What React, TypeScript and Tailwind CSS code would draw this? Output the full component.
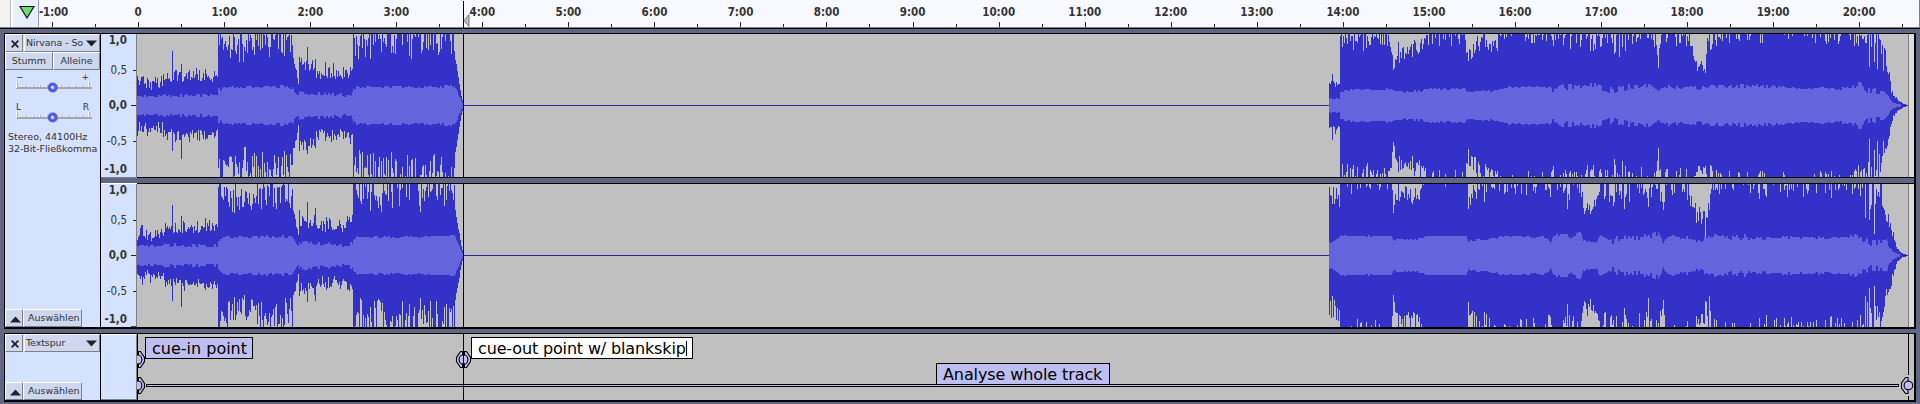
import React from "react";

const FONT = "font-['DejaVu_Sans','Liberation_Sans',sans-serif]";
const FONT_NARROW = "font-['DejaVu_Sans_Condensed','DejaVu_Sans',sans-serif] [font-stretch:condensed]";

const LEFT = 137;
const END = 1908;
const MID = 71;

// x, lowest peak, highest peak, rms, rms jitter
type Key = [number, number, number, number, number];
// x, upper peak, lower peak
type Spike = [number, number, number];

const upperKeys: Key[] = [
  [137, 14, 32, 9, 1], [162, 15, 30, 9, 1], [165, 22, 36, 10, 2], [217, 22, 38, 9, 2],
  [218, 46, 84, 15, 2], [224, 46, 84, 18, 1.5], [240, 40, 90, 18, 1.5], [250, 44, 76, 18, 1.5], [262, 46, 92, 18, 1.5],
  [286, 44, 90, 18, 2], [292, 42, 80, 18, 2], [294, 38, 50, 15, 2], [298, 20, 22, 9, 1], [299, 26, 48, 13, 2], [304, 28, 46, 12, 2],
  [320, 20, 44, 11, 2], [345, 24, 40, 10, 2], [352, 28, 44, 12, 2], [353, 46, 92, 16, 2], [358, 44, 100, 18, 1.5],
  [390, 42, 106, 18, 1.5], [420, 44, 104, 18, 1.5], [454, 48, 100, 19, 1.5], [455, 44, 50, 17, 1], [458, 26, 30, 11, 1],
  [461, 8, 10, 4, 0], [463, 0, 1, 0, 0], [1328, 0, 0, 0, 0], [1329, 20, 30, 6, 1], [1339, 18, 24, 7, 1],
  [1340, 52, 84, 13, 1], [1346, 54, 84, 15, 1], [1390, 53, 92, 16, 1], [1393, 34, 42, 14, 1], [1397, 44, 66, 13, 1],
  [1422, 46, 70, 14, 1], [1424, 56, 92, 16, 1], [1464, 58, 94, 16, 1], [1468, 44, 64, 13, 1], [1480, 50, 74, 14, 1], [1492, 50, 72, 14, 1],
  [1500, 56, 84, 16, 1], [1508, 62, 94, 18, 1], [1550, 60, 94, 18, 1], [1552, 50, 70, 13, 2], [1558, 58, 96, 17, 4],
  [1590, 52, 92, 20, 2], [1598, 54, 92, 20, 2], [1602, 52, 84, 15, 3], [1620, 46, 94, 16, 4], [1632, 56, 92, 19, 3],
  [1650, 60, 94, 19, 2], [1656, 52, 74, 17, 3], [1658, 38, 48, 12, 2], [1661, 60, 94, 18, 3], [1688, 56, 90, 18, 2],
  [1693, 42, 54, 18, 2], [1698, 35, 50, 16, 3], [1705, 34, 50, 16, 3], [1709, 52, 84, 18, 2], [1720, 62, 94, 19, 1.5],
  [1740, 60, 104, 18, 3], [1780, 62, 104, 19, 1.5], [1801, 64, 104, 16, 1], [1830, 60, 94, 17, 1.5], [1850, 60, 94, 17, 2],
  [1860, 54, 96, 20, 4], [1868, 44, 106, 15, 4], [1880, 44, 110, 14, 4], [1883, 38, 76, 15, 3], [1887, 32, 50, 11, 1],
  [1890, 20, 28, 5, 1], [1893, 8, 13, 2, 0], [1898, 4, 6, 1, 0], [1903, 1, 1, 0, 0], [1908, 0, 0, 0, 0],
];

const lowerKeys: Key[] = [
  ...upperKeys.filter((k) => k[0] < 1329).map(([x, lo, hi, r, j]): Key => [x, lo * 0.97, hi * 0.94, r, j]),
  [1329, 48, 72, 12, 1], [1339, 46, 66, 17, 1], [1341, 58, 100, 19, 0.6], [1391, 62, 104, 19, 0.6], [1393, 42, 50, 14, 1],
  [1396, 52, 78, 16, 1], [1420, 50, 78, 16, 1], [1425, 62, 108, 19, 0.5], [1466, 64, 108, 19, 0.5], [1468, 46, 52, 13, 1],
  [1471, 52, 84, 15, 1], [1496, 52, 84, 16, 1], [1500, 60, 100, 19, 1], [1546, 58, 90, 18, 1], [1550, 54, 74, 13, 1],
  [1553, 60, 110, 20, 2], [1574, 52, 96, 18, 3], [1580, 56, 100, 21, 3], [1583, 42, 58, 14, 1], [1596, 44, 60, 13, 1],
  [1600, 56, 96, 20, 1], [1612, 46, 100, 15, 4], [1635, 52, 100, 17, 4], [1658, 52, 90, 21, 3], [1663, 44, 58, 11, 2],
  [1667, 58, 104, 19, 1], [1684, 60, 96, 17, 2], [1692, 44, 60, 16, 3], [1700, 30, 48, 15, 3], [1709, 36, 54, 17, 3],
  [1712, 54, 96, 20, 2], [1730, 60, 100, 17, 2], [1742, 60, 100, 18, 3], [1762, 54, 100, 18, 4], [1780, 58, 100, 18, 1.5],
  [1830, 56, 96, 17, 1.5], [1850, 62, 90, 18, 3], [1862, 50, 92, 18, 4], [1868, 34, 100, 12, 4], [1880, 46, 84, 14, 4],
  [1885, 34, 56, 16, 3], [1889, 20, 36, 7, 2], [1893, 14, 24, 4, 1], [1897, 5, 7, 1, 0], [1902, 1, 2, 0, 0], [1908, 0, 0, 0, 0],
];

const upperSpikes: Spike[] = [
  [141, 28, 20], [172, 54, 45], [181, 41, 53], [196, 37, 26], [205, 36, 34], [218, 71, 62], [219, 60, 53], [220, 71, 71],
  [307, 58, 48], [299, 48, 45], [306, 44, 44], [315, 46, 42], [353, 71, 71], [1332, 31, 34], [1335, 18, 28],
  [1393, 35, 36], [1394, 37, 40], [1468, 44, 43], [1399, 42, 50], [1658, 37, 42], [1697, 34, 66], [1705, 32, 60],
  [1869, 38, 33], [1874, 43, 44], [1877, 36, 35], [1883, 34, 35], [1891, 12, 18],
];
const lowerSpikes: Spike[] = [
  [141, 30, 20], [172, 50, 45], [181, 39, 51], [205, 37, 34], [218, 68, 71], [299, 45, 40], [307, 53, 46],
  [315, 47, 45], [353, 71, 71], [1329, 68, 59], [1330, 60, 45], [1332, 51, 40], [1334, 51, 44], [1393, 42, 39],
  [1394, 50, 46], [1468, 46, 46], [1567, 46, 48], [1584, 41, 45], [1590, 41, 43], [1624, 46, 52], [1648, 48, 42],
  [1663, 45, 44], [1696, 32, 60], [1705, 18, 45], [1706, 38, 46], [1865, 37, 40], [1874, 21, 30], [1869, 35, 32],
];

// stretches where the lower half stays near full scale
const DEEP: [number, number][] = [[1688, 1709]];

const noise = (n: number) => {
  let v = Math.imul(n ^ 0x9e3779b9, 0x85ebca6b);
  v = Math.imul(v ^ (v >>> 13), 0xc2b2ae35);
  return ((v ^ (v >>> 16)) >>> 0) / 4294967296;
};

function wave(keys: Key[], spikes: Spike[], seed: number) {
  const marks = new Map(spikes.map((s) => [s[0], s]));
  let peaks = "";
  let rms = "";
  let k = 0;
  for (let x = LEFT; x < END; x++) {
    while (k < keys.length - 2 && keys[k + 1][0] <= x) k++;
    const a = keys[k];
    const b = keys[k + 1];
    const t = (x - a[0]) / (b[0] - a[0]);
    const at = (i: number) => a[i] + (b[i] - a[i]) * t;
    const shared = noise(x * 7 + seed);
    const pick = (s: number) => {
      const v = Math.pow(shared, 1.5) * 0.6 + Math.pow(noise(x * 13 + s), 1.5) * 0.4;
      return at(1) + (at(2) - at(1)) * Math.min(1, v * 1.15);
    };
    const silent = x >= 463 && x < 1329;
    const mark = marks.get(x);
    const deep = DEEP.some(([from, to]) => x >= from && x < to);
    const up = silent ? 0 : Math.min(MID, Math.round(mark ? mark[1] : pick(seed + 101)));
    const low = pick(seed + 503) + (deep ? 24 : x > 1345 && x < 1860 ? 3 : x > 217 && x < 455 ? -2 : 0);
    const down = silent ? 0 : Math.min(MID, Math.round(mark ? mark[2] : low));
    peaks += `M${x - LEFT} ${MID - up}h1V${MID + Math.max(0, down) + 1}h-1z`;
    const r = Math.round(at(3) + (noise((x >> 1) * 3 + seed) - 0.5) * 2 * at(4));
    if (r > 0) rms += `M${x - LEFT} ${MID - r}h1V${MID + r + 1}h-1z`;
  }
  return { peaks, rms };
}

const channels = [wave(upperKeys, upperSpikes, 11), wave(lowerKeys, lowerSpikes, 4211)];

function Channel({ data }: { data: { peaks: string; rms: string } }) {
  return (
    <svg width="1777" height="143" viewBox="0 0 1777 143" shapeRendering="crispEdges" className="block shrink-0 bg-[#c0c0c0]">
      <path d={data.peaks} fill="#3232c8" />
      <path d={data.rms} fill="#6464dc" />
      <path d="M326 71h866v1h-866zM1766 71h5v1h-5z" fill="#28289b" />
      <path d="M1772 0h5v143h-5z" fill="#dcdcdc" />
      <path d="M1771 0h1v143h-1z" fill="#808080" />
      <path d="M326 0h1v143h-1z" fill="#200000" />
    </svg>
  );
}

function Scale({ last = false }: { last?: boolean }) {
  return (
    <div className="flex h-[143px] w-[36px] shrink-0 border-r border-[#808080] bg-[#d5e2ff] text-[#333]">
      <div className={`flex w-[26px] shrink-0 flex-col items-end text-[11.5px] leading-[13px] whitespace-nowrap ${FONT_NARROW}`}>
        <span className="h-[30px] font-bold">1,0</span>
        <span className="h-[35px]">0,5</span>
        <span className="h-[36px] font-bold">0,0</span>
        <span className="h-[28px]">-0,5</span>
        <span className="h-[13px] font-bold">-1,0</span>
      </div>
      <svg width="9" height="143" shapeRendering="crispEdges" className="block" fill="#222">
        <path d="M6 36h3v1h-3zM4 71h5v1h-5zM6 107h3v1h-3z" />
        {last && <path d="M4 142h5v1h-5z" fill="#444" />}
      </svg>
    </div>
  );
}

const BTN = "flex items-center border-t border-l border-t-white border-l-white border-r border-b border-r-[#808080] border-b-[#808080] bg-[#cdd8f0] text-[#333] whitespace-nowrap";

function TitleBar({ name }: { name: string }) {
  return (
    <div className="flex h-[18px] shrink-0">
      <div className={`${BTN} w-[18px] justify-center pl-[2px]`}>
        <svg width="8" height="8" viewBox="0 0 8 8" className="mt-px"><path d="M0.700 0.700l6.600 6.600M7.300 0.700L0.700 7.300" stroke="#222" strokeWidth="1.8" /></svg>
      </div>
      <div className={`${BTN} ml-px min-w-0 flex-1 justify-between pl-px pr-[2px]`}>
        <span className={`${FONT} text-[9.5px] leading-[12px] tracking-[-0.1px]`}>{name}</span>
        <svg width="11" height="7" viewBox="0 0 11 7" className="shrink-0"><path d="M0 0.500h11L5.500 6.500z" fill="#222" /></svg>
      </div>
    </div>
  );
}

function SelectBar() {
  return (
    <div className="mt-auto flex h-[18px] shrink-0">
      <div className={`${BTN} w-[18px] justify-center pl-[2px]`}>
        <svg width="11" height="7" viewBox="0 0 11 7" className="mt-[3px] shrink-0"><path d="M0 6.500h11L5.500 0.500z" fill="#222" /></svg>
      </div>
      <div className={`${BTN} w-[59px] pl-[4px] ${FONT} text-[9.5px] leading-[12px]`}>Auswählen</div>
    </div>
  );
}

function Slider({ left, right }: { left: string; right: string }) {
  return (
    <div className="flex h-[30px] flex-col">
      <div className={`flex h-[9px] justify-between px-[11px] text-[9px] leading-[10px] text-[#333] ${FONT}`}>
        <span>{left}</span>
        <span>{right}</span>
      </div>
      <svg width="95" height="14" viewBox="0 0 95 14" className="block">
        <g shapeRendering="crispEdges">
          <path d="M11 6h76v2h-76z" fill="#a6a6ac" />
          <path d="M11 1h1v6h-1zM19 4h1v2h-1zM27 4h1v2h-1zM34 4h1v2h-1zM41 4h1v2h-1zM55 4h1v2h-1zM62 4h1v2h-1zM69 4h1v2h-1zM76 4h1v2h-1zM83 1h1v5h-1z" fill="#fff" />
          <path d="M12 1h1v5h-1zM20 4h1v2h-1zM28 4h1v2h-1zM35 4h1v2h-1zM42 4h1v2h-1zM56 4h1v2h-1zM63 4h1v2h-1zM70 4h1v2h-1zM77 4h1v2h-1zM84 1h1v5h-1z" fill="#b0b4bc" />
        </g>
        <circle cx="47.700" cy="6.500" r="3.500" fill="#b4b4b4" stroke="#4c5bea" strokeWidth="3" />
        <circle cx="47" cy="6" r="1" fill="#fff" />
      </svg>
    </div>
  );
}

function TimeRuler() {
  const minutes = Array.from({ length: 21 }, (_, i) => (i === 0 ? "0" : `${i}:00`));
  const ticks = Array.from({ length: 44 }, (_, i) => {
    const x = Math.floor(52.4 + i * 43.03);
    return i % 2 ? `M${x} 24h1v3h-1z` : `M${x} 22h1v5h-1z`;
  }).join("");
  return (
    <div className="relative flex h-[29px] shrink-0 overflow-hidden border-b border-black bg-[#f8f9ff]">
      <div className="h-[27px] w-[11px] shrink-0 border-r border-[#b8b8b8] bg-[#f4f4f4]" />
      <div className="ml-px flex h-[27px] w-[27px] shrink-0 justify-end border-r border-l border-r-[#98a0ac] border-l-white bg-[#e8efff] pt-[5px] pr-[3px]">
        <svg width="16" height="14" viewBox="0 0 16 14" className="shrink-0"><path d="M1 1.500h14L8 13z" fill="#6fdc6f" stroke="#111" strokeWidth="1.200" /></svg>
      </div>
      <div className={`flex pt-[6px] text-[11.5px] leading-[13px] font-bold whitespace-nowrap text-[#333] ${FONT_NARROW}`}>
        <span className="w-[56.200px] shrink-0 tracking-[-0.2px]">-1:00</span>
        {minutes.map((m) => (
          <span key={m} className="w-[86.05px] shrink-0 text-center">{m}</span>
        ))}
      </div>
      <svg width="1920" height="28" className="absolute top-0 left-0" shapeRendering="crispEdges">
        <path d={ticks} fill="#222" />
        <path d="M0 27h1920v1h-1920zM1919 0h1v28h-1z" fill="#808080" />
        <path d="M463 1h1v27h-1z" fill="#000" />
        <path d="M464 20.500l5-6v12z" fill="#c0c0c0" stroke="#777" shapeRendering="auto" />
      </svg>
    </div>
  );
}

function Handle({ x, y }: { x: number; y: number }) {
  return (
    <g transform={`translate(${x + 0.5} ${y + 0.5})`} fill="#bebef0" stroke="#000" strokeWidth="1.1">
      <path d="M-3-8H3L7-2V2L3 8H-3L-7 2V-2z" />
      <ellipse cx="0" cy="0" rx="4.400" ry="4.800" />
      <path d="M-1.500-8h3v4h-3zM-1.500 4h3v4h-3z" fill="#000" stroke="none" />
    </g>
  );
}

function LabelCanvas() {
  const box = `absolute flex h-[22px] items-center border border-black pl-[6px] text-[16px] leading-[19px] whitespace-nowrap text-black ${FONT}`;
  return (
    <div className="relative h-[66px] w-[1777px] shrink-0 overflow-hidden bg-[#c0c0c0]">
      <svg width="1777" height="66" viewBox="137 334 1777 66" className="absolute top-0 left-0">
        <g shapeRendering="crispEdges">
          <path d="M137 334h1v66h-1zM1908 334h1v41h-1zM1908 396h1v4h-1z" fill="#000" />
          <path d="M146 384h1753v3h-1753z" fill="#000" />
          <path d="M147 385h1751v1h-1751z" fill="#bebef0" />
        </g>
        <Handle x={137} y={359} />
        <Handle x={463} y={359} />
        <Handle x={137} y={385} />
        <path d="M463 334h1v66h-1z" fill="#200000" shapeRendering="crispEdges" />
        <g fill="#bebef0" stroke="#000" strokeWidth="1.1">
          <path d="M1908 377.500h-2.500L1901.500 383v5l4 5.500h2.500z" />
          <circle cx="1908.400" cy="385.500" r="4.300" />
        </g>
      </svg>
      <div className={`${box} top-[3px] left-[8px] w-[108px] bg-[#bebef0]`}>cue-in point</div>
      <div className={`${box} top-[3px] left-[334px] w-[222px] bg-white tracking-[-0.15px]`}>
        cue-out point w/ blankskip<span className="h-[15px] w-px bg-black" />
      </div>
      <div className={`${box} top-[29px] left-[799px] w-[174px] bg-[#bebef0] tracking-[-0.1px]`}>Analyse whole track</div>
    </div>
  );
}

export default function App() {
  return (
    <div className="flex h-[404px] w-[1920px] flex-col overflow-hidden bg-[#626685]">
      <TimeRuler />
      <div className="mt-[4px] ml-[4px] flex h-[296px] w-[1912px] shrink-0 border-t border-r-2 border-b-2 border-l border-black">
        <div className="flex w-[95px] shrink-0 flex-col bg-[#d5e2ff]">
          <TitleBar name="Nirvana - So" />
          <div className={`flex h-[18px] shrink-0 text-[9.5px] ${FONT}`}>
            <div className={`${BTN} w-[48px] justify-center`}>Stumm</div>
            <div className={`${BTN} w-[47px] justify-center`}>Alleine</div>
          </div>
          <div className="mt-[2px]">
            <Slider left="−" right="+" />
            <Slider left="L" right="R" />
          </div>
          <div className={`-mt-px pl-[3px] text-[9.5px] leading-[12px] whitespace-nowrap text-[#333] ${FONT}`}>
            <div>Stereo, 44100Hz</div>
            <div>32-Bit-Fließkomma</div>
          </div>
          <SelectBar />
        </div>
        <div className="w-px shrink-0 bg-black" />
        <div className="flex flex-col">
          <div className="flex">
            <Scale />
            <Channel data={channels[0]} />
          </div>
          <div className="flex h-[7px] bg-[#626685]">
            <div className="w-[36px] border-y border-t-[#808080] border-b-white" />
            <div className="flex-1 border-y border-black" />
          </div>
          <div className="flex">
            <Scale last />
            <Channel data={channels[1]} />
          </div>
        </div>
      </div>
      <div className="mt-[4px] ml-[4px] flex h-[69px] w-[1912px] shrink-0 border-t border-r-2 border-b-2 border-l border-black">
        <div className="flex w-[95px] shrink-0 flex-col bg-[#d5e2ff]">
          <TitleBar name="Textspur" />
          <SelectBar />
        </div>
        <div className="w-px shrink-0 bg-black" />
        <div className="w-[36px] shrink-0 border-t border-r border-b border-t-white border-r-[#808080] border-b-[#808080] bg-[#d5e2ff]" />
        <LabelCanvas />
      </div>
    </div>
  );
}
